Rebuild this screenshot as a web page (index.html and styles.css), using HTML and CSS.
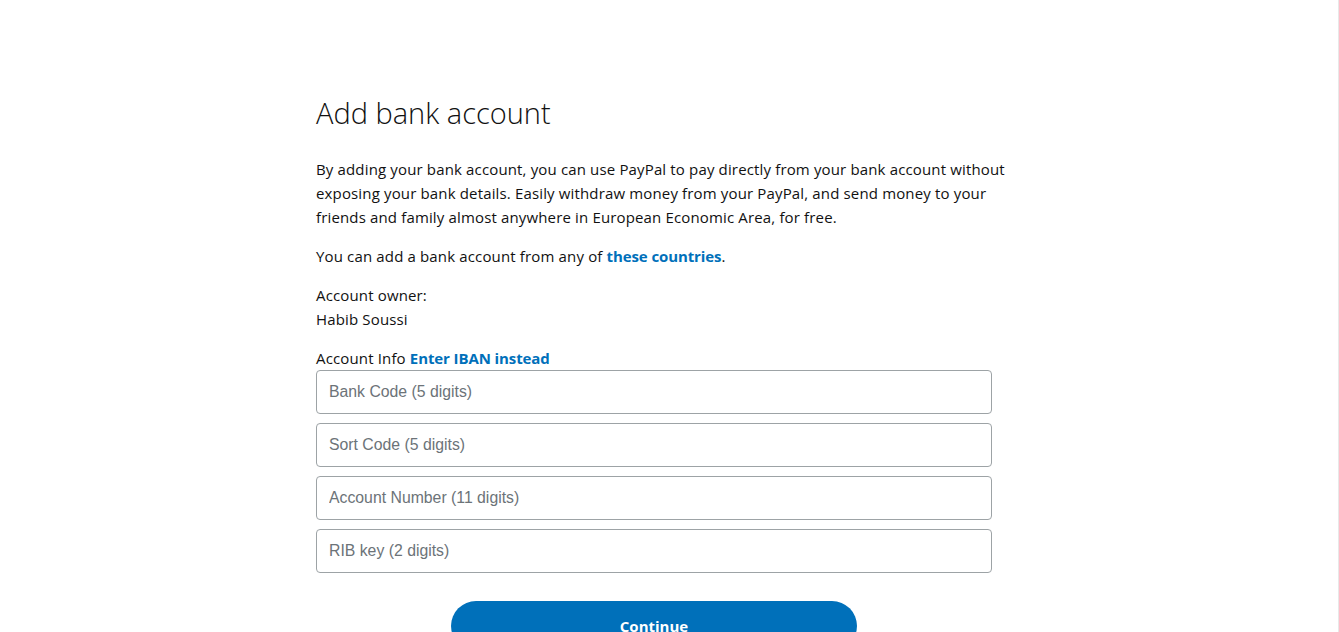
FILE: index.html
```html
<!DOCTYPE html>
<html lang="en">
<head>
<meta charset="utf-8">
<title>Add bank account</title>
<link rel="stylesheet" href="styles.css">
</head>
<body>
<div class="page">
  <main class="content">
    <h1 class="title">Add bank account</h1>
    <p class="text">By adding your bank account, you can use PayPal to pay directly from your bank account without exposing your bank details. Easily withdraw money from your PayPal, and send money to your friends and family almost anywhere in European Economic Area, for free.</p>
    <p class="text">You can add a bank account from any of <a class="link" href="#">these countries</a>.</p>
    <div class="owner">
      <div>Account owner:</div>
      <div>Habib Soussi</div>
    </div>
    <div class="info-label">Account Info <a class="link" href="#">Enter IBAN instead</a></div>
    <form class="fields">
      <input class="field" type="text" placeholder="Bank Code (5 digits)">
      <input class="field" type="text" placeholder="Sort Code (5 digits)">
      <input class="field" type="text" placeholder="Account Number (11 digits)">
      <input class="field" type="text" placeholder="RIB key (2 digits)">
      <div class="actions">
        <button class="btn" type="button">Continue</button>
      </div>
    </form>
  </main>
</div>
</body>
</html>
```
FILE: styles.css
```css
html, body {
  margin: 0;
  padding: 0;
  background: #fff;
}
body {
  font-family: "Open Sans", "Noto Sans", sans-serif;
  color: #111;
  font-size: 15px;
  line-height: 24px;
  letter-spacing: 0.15px;
}
.page {
  min-height: 100vh;
  box-sizing: border-box;
  border-right: 1px solid #e8e8e8;
  overflow: hidden;
}
.content {
  width: 676px;
  margin-left: 316px;
  padding-top: 93px;
}
.title {
  margin: 0;
  font-weight: 300;
  font-size: 29px;
  line-height: 40px;
  letter-spacing: 0;
  color: #111;
}
.text {
  margin: 24px 0 0;
  width: 720px;
}
.text + .text {
  margin-top: 15px;
}
.owner {
  margin-top: 15px;
}
.info-label {
  margin-top: 15px;
}
.link {
  color: #0070ba;
  font-weight: 700;
  letter-spacing: -0.1px;
  text-decoration: none;
}
.fields {
  display: flex;
  flex-direction: column;
  gap: 9px;
  margin-top: 0;
}
.field {
  box-sizing: border-box;
  height: 44px;
  width: 100%;
  border: 1px solid #9da3a6;
  border-radius: 4px;
  padding: 0 12px;
  font-family: "Liberation Sans", Arial, sans-serif;
  font-size: 15.8px;
  letter-spacing: 0;
  color: #2c2e2f;
  background: #fff;
}
.field::placeholder {
  color: #6c7378;
}
.actions {
  display: flex;
  justify-content: center;
  margin-top: 19px;
}
.btn {
  width: 406px;
  height: 50px;
  border: none;
  border-radius: 25px;
  background: #0070ba;
  color: #fff;
  font-family: "Open Sans", "Noto Sans", sans-serif;
  font-weight: 700;
  font-size: 15px;
  letter-spacing: 0;
}
```
